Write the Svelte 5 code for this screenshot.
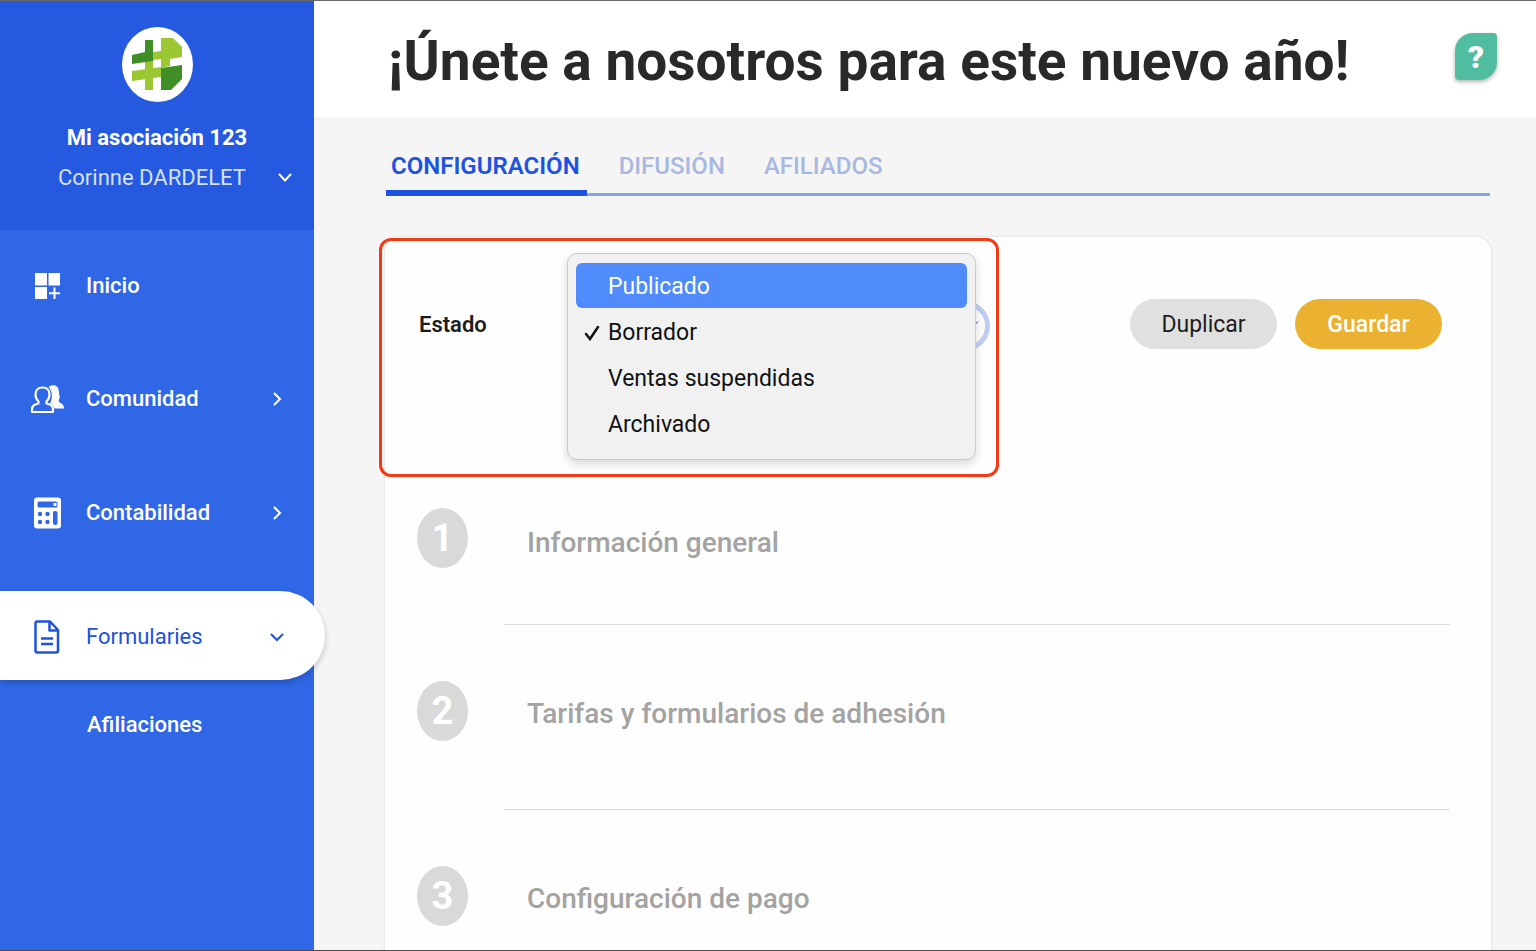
<script lang="ts">
  let status = $state("Borrador");
  let highlighted = $state("Publicado");
  let activeTab = $state("Configuración");

  const statuses = ["Publicado", "Borrador", "Ventas suspendidas", "Archivado"];
  const tabs = ["Configuración", "Difusión", "Afiliados"];
  const steps = ["Información general", "Tarifas y formularios de adhesión", "Configuración de pago"];
</script>

<div class="app">
  <aside class="sidebar">
    <div class="profile">
      <svg class="logo" viewBox="0 0 71 75" aria-hidden="true">
        <ellipse cx="35.5" cy="37.5" rx="35.5" ry="37.5" fill="#fff" />
        <path d="M23 34h8v29h-8z" fill="#9bc832" />
        <path d="M10 44l29-4v10l-29 4z" fill="#9bc832" />
        <path d="M31 25l8-1V11h12l9 9v10l-12 2v7l-9 2v-9l-8 1z" fill="#9bc832" />
        <path d="M10 28l13-3V13h8v21l-21 3z" fill="#3f8f26" />
        <path d="M39 41l21-3v14L49 63H39z" fill="#3f8f26" />
      </svg>
      <strong class="association">Mi asociación 123</strong>
      <button class="user">
        <span>Corinne DARDELET</span>
        <svg width="14" height="10" viewBox="0 0 14 10" aria-hidden="true">
          <path d="M1.500 1.500L7 7.500L12.500 1.500" fill="none" stroke="currentColor" stroke-width="2" stroke-linecap="round" />
        </svg>
      </button>
    </div>

    <nav class="menu">
      <a class="item" href="#inicio">
        <svg class="icon" viewBox="0 0 34 34" aria-hidden="true">
          <path d="M5 4h12v12.500H5zM18.500 4H30v12.500H18.500zM5 18h12v12H5z" fill="currentColor" />
          <path d="M24.500 18.500v11.500M19 24.300h11" stroke="currentColor" stroke-width="2" />
        </svg>
        <span>Inicio</span>
      </a>
      <a class="item" href="#comunidad">
        <svg class="icon" viewBox="0 0 34 34" aria-hidden="true">
          <path
            d="M18.500 5c5-3.500 10.500-1.500 10.500 5.500 0 3 1.500 5 .5 6-1.500 1.500-1 3.500 1 4.500 2 .8 3.500 2.500 3.500 5.500h-9.500c-.5-2.500-2-4-4.500-5 2.500-4 3-12-1.500-16.500z"
            fill="currentColor"
          />
          <path
            d="M12.500 5.500c-4.500 0-7 3-7 7 0 3 1 5 3 7v2c-4 1-6.500 2-6.500 6v2.500h21V27.500c0-4-2.500-5-6.500-6v-2c2-2 3-4 3-7 0-4-2.500-7-7-7z"
            fill="none" stroke="currentColor" stroke-width="2.200" stroke-linejoin="round"
          />
        </svg>
        <span>Comunidad</span>
        <svg class="arrow" viewBox="0 0 14 14" aria-hidden="true"><path d="M4.500 1.500L10 7l-5.500 5.500" /></svg>
      </a>
      <a class="item" href="#contabilidad">
        <svg class="icon" viewBox="0 0 34 34" aria-hidden="true">
          <path
            fill-rule="evenodd" fill="currentColor"
            d="M7 1.500h21a3 3 0 0 1 3 3v25a3 3 0 0 1-3 3H7a3 3 0 0 1-3-3v-25a3 3 0 0 1 3-3zM9 5.500a1.500 1.500 0 0 0-1.500 1.500v3A1.500 1.500 0 0 0 9 11.500h17a1.500 1.500 0 0 0 1.500-1.500V7A1.500 1.500 0 0 0 26 5.500z"
          />
          <path d="M23.500 7h3v3h-3z" fill="currentColor" />
          <g class="keys">
            <circle cx="10" cy="18" r="2.200" />
            <circle cx="17.500" cy="18" r="2.200" />
            <circle cx="10" cy="26" r="2.200" />
            <circle cx="17.500" cy="26" r="2.200" />
            <rect x="23" y="15" width="4.500" height="14" rx="2" />
          </g>
        </svg>
        <span>Contabilidad</span>
        <svg class="arrow" viewBox="0 0 14 14" aria-hidden="true"><path d="M4.500 1.500L10 7l-5.500 5.500" /></svg>
      </a>
      <a class="item current" href="#formularios" aria-current="page">
        <svg class="icon" viewBox="0 0 34 34" aria-hidden="true">
          <g fill="none" stroke="currentColor" stroke-width="2.500" stroke-linejoin="round">
            <path d="M7.500 1.500H20L28 10v20.500a2 2 0 0 1-2 2H7.500a2 2 0 0 1-2-2v-27a2 2 0 0 1 2-2z" />
            <path d="M19.500 2v8.500H28" />
            <path d="M11 18.500h12M11 24h12" />
          </g>
        </svg>
        <span>Formularies</span>
        <svg class="arrow" viewBox="0 0 14 14" aria-hidden="true"><path d="M1.500 4.500L7 10l5.500-5.500" /></svg>
      </a>
      <a class="subitem" href="#afiliaciones">Afiliaciones</a>
    </nav>
  </aside>

  <main>
    <header>
      <h1>¡Únete a nosotros para este nuevo año!</h1>
      <button class="help" aria-label="Ayuda">?</button>
    </header>

    <div class="content">
      <div class="tabs" role="tablist">
        {#each tabs as tab}
          <button role="tab" class:active={tab === activeTab} aria-selected={tab === activeTab} onclick={() => (activeTab = tab)}>
            {tab}
          </button>
        {/each}
      </div>

      <section class="card">
        <div class="toolbar">
          <div class="status">
            <label for="status">Estado</label>
            <div class="dropdown">
              <select id="status" bind:value={status}>
                {#each statuses as option}
                  <option>{option}</option>
                {/each}
              </select>
              <svg class="knob" viewBox="0 0 50 50" aria-hidden="true">
                <circle cx="25" cy="25" r="22.500" fill="none" stroke="#c0cdf0" stroke-width="5" />
                <path d="M12 20l13 7 14-7L25 35z" fill="#4d6fc4" />
              </svg>
              <div class="options" role="listbox" aria-label="Estado">
                {#each statuses as option}
                  <button
                    role="option"
                    class:highlighted={option === highlighted}
                    aria-selected={option === status}
                    onmouseenter={() => (highlighted = option)}
                    onclick={() => (status = option)}
                  >
                    <span class="tick">
                      {#if option === status}
                        <svg width="16" height="16" viewBox="0 0 16 16" aria-hidden="true">
                          <path d="M2 9l4 5 8-12" fill="none" stroke="currentColor" stroke-width="2.500" stroke-linecap="round" />
                        </svg>
                      {/if}
                    </span>
                    {option}
                  </button>
                {/each}
              </div>
            </div>
          </div>
          <div class="actions">
            <button class="pill">Duplicar</button>
            <button class="pill save">Guardar</button>
          </div>
        </div>

        <ol class="steps">
          {#each steps as step, i}
            <li>
              <span class="number">{i + 1}</span>
              <h2>{step}</h2>
            </li>
          {/each}
        </ol>
      </section>
    </div>
  </main>
</div>

<style>
  :global(body) {
    margin: 0;
    background: #f5f5f5;
  }

  .app {
    display: flex;
    box-sizing: border-box;
    height: 100vh;
    overflow: hidden;
    border-top: 1px solid #69696c;
    border-bottom: 1px solid #4b4d52;
    font-family: Roboto, "Liberation Sans", sans-serif;
    font-size: 23px;
    line-height: 32px;
    color: #1d1d1f;
  }

  button {
    padding: 0;
    border: none;
    background: none;
    color: inherit;
    font: inherit;
    cursor: pointer;
  }

  .sidebar {
    position: relative;
    z-index: 1;
    flex: none;
    width: 314px;
    background: #3067e6;
    color: #fff;
    font-size: 22px;
  }

  .profile {
    display: flex;
    flex-direction: column;
    align-items: center;
    box-sizing: border-box;
    height: 229px;
    padding-top: 26px;
    background: #2459e0;
  }

  .logo {
    width: 71px;
    height: 75px;
    margin-bottom: 20px;
  }

  .association {
    font-weight: 700;
    margin-bottom: 8px;
  }

  .user {
    display: flex;
    align-items: center;
    justify-content: space-between;
    align-self: stretch;
    padding: 0 22px 0 58px;
    color: #d5e0fb;
  }

  .user svg {
    color: #fff;
  }

  .menu {
    font-weight: 500;
  }

  .item {
    display: flex;
    align-items: center;
    height: 114px;
    padding: 0 30px;
    color: #fff;
    text-decoration: none;
  }

  .item:first-child {
    height: 112px;
  }

  .icon {
    width: 34px;
    height: 34px;
    margin-right: 22px;
  }

  .keys {
    fill: #3067e6;
  }

  .arrow {
    width: 14px;
    height: 14px;
    margin-left: auto;
    fill: none;
    stroke: currentColor;
    stroke-width: 2;
    stroke-linecap: round;
  }

  .current {
    height: 87px;
    margin: 21px -11px 0 0;
    padding: 2px 41px 0 30px;
    border-radius: 0 45px 45px 0;
    background: #fff;
    box-shadow: 0 3px 6px rgba(0, 0, 0, 0.2);
    color: #2052dd;
    font-weight: 400;
  }

  .subitem {
    display: block;
    padding: 29px 30px 29px 87px;
    color: #fff;
    text-decoration: none;
  }

  main {
    display: flex;
    flex-direction: column;
    flex: 1;
    min-width: 0;
    background: #f5f5f5;
  }

  header {
    display: flex;
    align-items: flex-start;
    justify-content: space-between;
    box-sizing: border-box;
    flex: none;
    height: 116px;
    padding: 28px 39px 0 74px;
    background: #fff;
  }

  h1 {
    margin: 0;
    font-size: 55px;
    line-height: 64px;
    font-weight: 700;
    color: #29292a;
  }

  .help {
    width: 42px;
    height: 47px;
    margin-top: 4px;
    border-radius: 18px 4px 18px 4px;
    background: #50bda0;
    box-shadow: 0 2px 4px rgba(0, 0, 0, 0.3);
    color: #fff;
    font-size: 32px;
    font-weight: 900;
  }

  .content {
    display: flex;
    flex-direction: column;
    flex: 1;
    padding: 30px 45px 0 71px;
  }

  .tabs {
    display: flex;
    gap: 27px;
    height: 46px;
    margin: 0 1px 41px;
    border-bottom: 3px solid #86a2e8;
  }

  .tabs button {
    display: flex;
    padding: 3px 7px 0 5px;
    margin-bottom: -3px;
    border-bottom: 6px solid transparent;
    color: #a9b8e0;
    font-size: 24px;
    font-weight: 500;
    text-transform: uppercase;
  }

  .tabs .active {
    border-color: #2052e0;
    color: #2052e0;
    font-weight: 600;
  }

  .card {
    flex: 1;
    border-radius: 16px 16px 0 0;
    background: #fefefe;
    box-shadow: 0 0 3px rgba(0, 0, 0, 0.12);
  }

  .toolbar {
    display: flex;
    align-items: center;
    justify-content: space-between;
    padding-right: 49px;
  }

  .status {
    display: flex;
    box-sizing: border-box;
    width: 620px;
    height: 239px;
    margin: 1px 0 0 -6px;
    padding: 12px 20px 14px 37px;
    border: 3px solid #f23a14;
    border-radius: 12px;
  }

  .status label {
    width: 148px;
    padding-top: 56px;
    font-size: 22px;
    font-weight: 600;
  }

  .dropdown {
    position: relative;
    flex: 1;
  }

  select {
    width: 100%;
    height: 44px;
    margin-top: 48px;
    padding: 0 40px;
    appearance: none;
    border: none;
    background: none;
    font: inherit;
    color: inherit;
  }

  .knob {
    position: absolute;
    top: 48px;
    right: -14px;
    width: 50px;
    height: 50px;
  }

  .options {
    position: absolute;
    inset: 0 0 0 0;
    display: flex;
    flex-direction: column;
    gap: 1px;
    padding: 9px 8px;
    border: 1px solid #c9c9ca;
    border-radius: 10px;
    background: #f1f1f1;
    box-shadow: 0 4px 10px rgba(0, 0, 0, 0.15);
  }

  .options button {
    display: flex;
    align-items: center;
    box-sizing: border-box;
    height: 45px;
    padding-top: 3px;
    border-radius: 6px;
    color: #111;
    text-align: left;
  }

  .options .highlighted {
    background: #508bfb;
    color: #fff;
  }

  .tick {
    display: flex;
    width: 24px;
    padding-left: 8px;
  }

  .actions {
    display: flex;
    gap: 18px;
    margin-bottom: 67px;
  }

  .pill {
    width: 147px;
    height: 50px;
    padding-top: 2px;
    border-radius: 25px;
    background: #e0e0e0;
    color: #1d1d1f;
  }

  .save {
    background: #eab230;
    color: #fff;
    font-weight: 500;
  }

  .steps {
    margin: 0;
    padding: 0 41px 0 32px;
    list-style: none;
  }

  .steps li {
    display: flex;
    gap: 36px;
  }

  .number {
    width: 51px;
    height: 60px;
    margin-top: 56px;
    border-radius: 50%;
    background: #d9d9d9;
    color: #fff;
    font-size: 38px;
    line-height: 60px;
    font-weight: 700;
    text-align: center;
  }

  h2 {
    flex: 1;
    margin: 0;
    padding: 69px 0 75px 23px;
    border-bottom: 1px solid #dedede;
    font-size: 28px;
    line-height: 40px;
    font-weight: 500;
    color: #a3a3a3;
  }

  .steps li:first-child .number {
    margin-top: 31px;
  }

  .steps li:first-child h2 {
    padding: 46px 0 61px 23px;
  }
</style>
